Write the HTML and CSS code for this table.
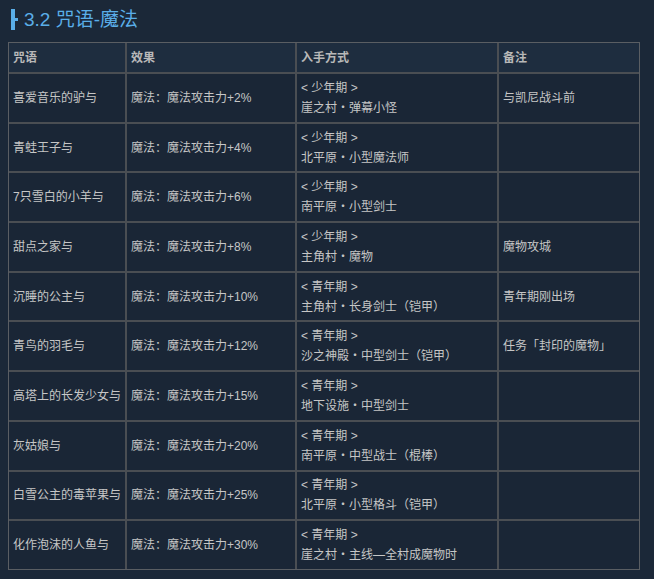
FILE: index.html
```html
<!DOCTYPE html>
<html lang="zh">
<head>
<meta charset="utf-8">
<title>3.2 咒语-魔法</title>
<link rel="stylesheet" href="styles.css">
</head>
<body>
<div class="page">
  <h2 class="section-title">
    <svg class="title-mark" width="8" height="21" viewBox="0 0 8 21"><rect x="0" y="0" width="4" height="21" fill="#5aaee8"/><rect x="4" y="9" width="3" height="3" fill="#5aaee8"/></svg>
    <span>3.2 咒语-魔法</span>
  </h2>
  <table class="spell-table">
    <colgroup>
      <col class="c1"><col class="c2"><col class="c3"><col class="c4">
    </colgroup>
    <thead>
      <tr><th>咒语</th><th>效果</th><th>入手方式</th><th>备注</th></tr>
    </thead>
    <tbody>
      <tr><td>喜爱音乐的驴与</td><td>魔法：魔法攻击力+2%</td><td>&lt; 少年期 &gt;<br>崖之村・弹幕小怪</td><td>与凯尼战斗前</td></tr>
      <tr><td>青蛙王子与</td><td>魔法：魔法攻击力+4%</td><td>&lt; 少年期 &gt;<br>北平原・小型魔法师</td><td></td></tr>
      <tr><td>7只雪白的小羊与</td><td>魔法：魔法攻击力+6%</td><td>&lt; 少年期 &gt;<br>南平原・小型剑士</td><td></td></tr>
      <tr><td>甜点之家与</td><td>魔法：魔法攻击力+8%</td><td>&lt; 少年期 &gt;<br>主角村・魔物</td><td>魔物攻城</td></tr>
      <tr><td>沉睡的公主与</td><td>魔法：魔法攻击力+10%</td><td>&lt; 青年期 &gt;<br>主角村・长身剑士（铠甲）</td><td>青年期刚出场</td></tr>
      <tr><td>青鸟的羽毛与</td><td>魔法：魔法攻击力+12%</td><td>&lt; 青年期 &gt;<br>沙之神殿・中型剑士（铠甲）</td><td>任务「封印的魔物」</td></tr>
      <tr><td>高塔上的长发少女与</td><td>魔法：魔法攻击力+15%</td><td>&lt; 青年期 &gt;<br>地下设施・中型剑士</td><td></td></tr>
      <tr><td>灰姑娘与</td><td>魔法：魔法攻击力+20%</td><td>&lt; 青年期 &gt;<br>南平原・中型战士（棍棒）</td><td></td></tr>
      <tr><td>白雪公主的毒苹果与</td><td>魔法：魔法攻击力+25%</td><td>&lt; 青年期 &gt;<br>北平原・小型格斗（铠甲）</td><td></td></tr>
      <tr><td>化作泡沫的人鱼与</td><td>魔法：魔法攻击力+30%</td><td>&lt; 青年期 &gt;<br>崖之村・主线—全村成魔物时</td><td></td></tr>
    </tbody>
  </table>
</div>
</body>
</html>
```
FILE: styles.css
```css
html, body {
  margin: 0;
  padding: 0;
  background: #1b2838;
}
body {
  width: 654px;
  height: 579px;
  overflow: hidden;
  font-family: "Liberation Sans", "Noto Sans CJK SC", sans-serif;
  color: #c6c6c6;
}
.page {
  padding: 8px 0 0 8px;
}
.section-title {
  margin: 0;
  height: 34px;
  display: flex;
  align-items: flex-start;
  gap: 5px;
  padding-left: 3px;
  font-size: 19px;
  font-weight: normal;
  line-height: 23px;
  color: #5aaee8;
  font-family: "Liberation Sans", "Noto Sans CJK SC", sans-serif;
}
.title-mark {
  margin-top: 1px;
  flex: none;
}
.spell-table {
  width: 632px;
  table-layout: fixed;
  border-collapse: separate;
  border-spacing: 0;
  border: 1px solid #5a5e63;
  font-size: 12px;
}
.c1 { width: 118px; }
.c2 { width: 170px; }
.c3 { width: 202px; }
.c4 { width: 140px; }
.spell-table th,
.spell-table td {
  border-right: 2px solid #4a4e53;
  border-bottom: 2px solid #4a4e53;
  padding: 0 4px;
  text-align: left;
  vertical-align: middle;
  line-height: 20px;
  white-space: nowrap;
}
.spell-table th:last-child,
.spell-table td:last-child {
  border-right: 0;
}
.spell-table tbody tr:last-child td {
  border-bottom: 0;
}
.spell-table th {
  height: 29px;
  font-weight: bold;
  color: #b8b8b8;
  background: #1e2d3f;
}
.spell-table td {
  height: 47.7px;
  background: #1a2636;
}
```
